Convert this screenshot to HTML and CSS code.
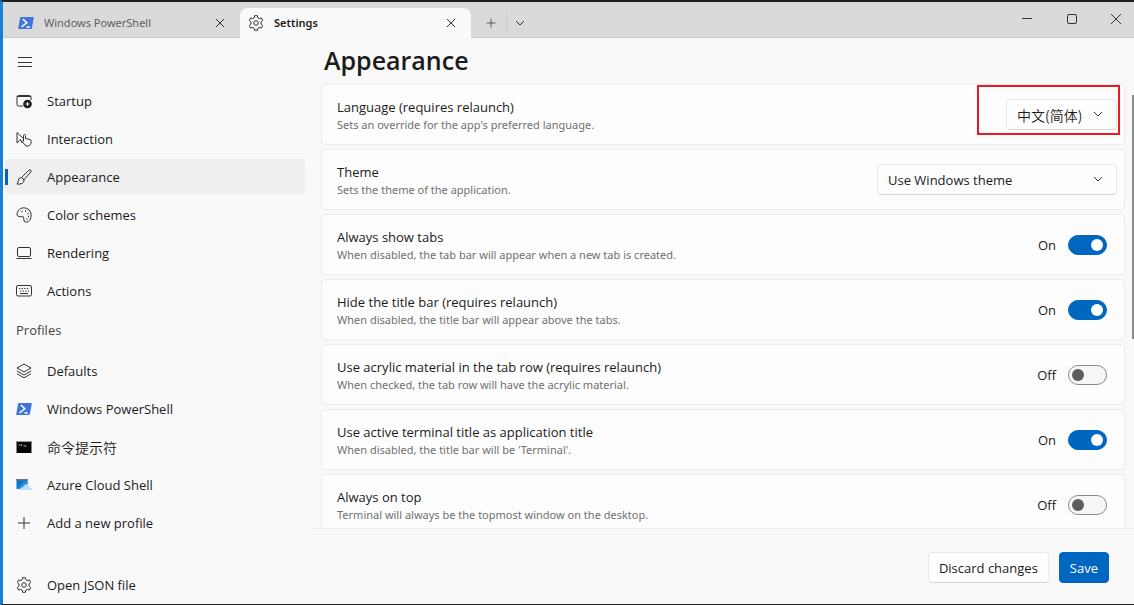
FILE: index.html
```html
<!DOCTYPE html>
<html lang="en">
<head>
<meta charset="utf-8">
<title>Settings</title>
<link rel="stylesheet" href="styles.css">
</head>
<body>
<svg class="defs" aria-hidden="true">
  <symbol id="gear" viewBox="0 0 16 16"><path d="M6.600 .7h2.800l.5 2.200 1.300.7 2.100-.7 1.400 2.500-1.600 1.500v2.200l1.600 1.500-1.400 2.500-2.100-.7-1.300.7-.5 2.200H6.600l-.5-2.200-1.300-.7-2.100.7-1.400-2.500 1.600-1.500V6.900L1.300 5.400l1.400-2.500 2.100.7 1.300-.7z" stroke-linejoin="round"/><circle cx="8" cy="8" r="2.300"/></symbol>
  <symbol id="close" viewBox="0 0 16 16"><path d="M4 4l8 8M12 4l-8 8"/></symbol>
  <symbol id="plus" viewBox="0 0 16 16"><path d="M8 2v12M2 8h12"/></symbol>
  <symbol id="chevron" viewBox="0 0 16 16"><path d="M4 6l4 4 4-4"/></symbol>
  <symbol id="powershell" viewBox="0 0 16 16"><path d="M3 2h12.200q.7 0 .6.700l-2 10.600q-.2.700-.9.700H.8q-.7 0-.6-.7L2.100 2.700Q2.300 2 3 2z" fill="#3f74da" stroke="none"/><path d="M4.800 4l4 3.800-5.300 4M8.500 11.900h3.300" fill="none" stroke="#fff" stroke-width="1.500"/></symbol>
</svg>
<div class="window">
  <header class="titlebar">
    <div class="tab">
      <svg class="icon"><use href="#powershell"/></svg>
      <span class="tab-title">Windows PowerShell</span>
      <button class="tab-button" aria-label="Close Windows PowerShell"><svg class="icon"><use href="#close"/></svg></button>
    </div>
    <div class="tab tab-active">
      <svg class="icon"><use href="#gear"/></svg>
      <span class="tab-title">Settings</span>
      <button class="tab-button" aria-label="Close Settings"><svg class="icon"><use href="#close"/></svg></button>
    </div>
    <div class="new-tab">
      <button class="new-button" aria-label="New tab"><svg class="icon-small"><use href="#plus"/></svg></button>
      <button class="new-button new-menu" aria-label="New tab menu"><svg class="icon"><use href="#chevron"/></svg></button>
    </div>
    <div class="window-controls">
      <button class="window-button" aria-label="Minimize"><svg class="icon" viewBox="0 0 16 16"><path d="M3 6.500h10"/></svg></button>
      <button class="window-button" aria-label="Maximize"><svg class="icon" viewBox="0 0 16 16"><rect x="3.500" y="2.500" width="9" height="9" rx="1.500"/></svg></button>
      <button class="window-button" aria-label="Close"><svg class="icon" viewBox="0 0 16 16"><path d="M3 2l10 10M13 2L3 12"/></svg></button>
    </div>
  </header>
  <div class="body">
    <nav class="sidebar">
      <button class="menu-button" aria-label="Menu"><svg class="icon" viewBox="0 0 16 16"><path d="M1 3.500h14M1 8.500h14M1 12.500h14"/></svg></button>
      <div class="nav-list">
        <a class="nav-item" href="#"><svg class="icon" viewBox="0 0 16 16"><path d="M7 13H2.500Q1 13 1 11.500V4q0-1.500 1.500-1.500h11Q15 2.500 15 4v3M1 3.500h14"/><circle cx="11.500" cy="11" r="4.300" fill="#1b1b1b" stroke="none"/><path d="M9.500 11h4M11.500 9v4" stroke="#fff"/></svg>Startup</a>
        <a class="nav-item" href="#"><svg class="icon" viewBox="0 0 16 16"><path d="M3.500 9.500L1 12V1.500l7 6.500M4 8l2 4"/><path d="M7.500 10V4.500q0-1 1-1t1 1v3l4.500 1q1.500.5 1.300 2l-.5 2.500-2 2h-3L8 12.500 5.500 10.500q.5-1 2-.5z"/></svg>Interaction</a>
        <a class="nav-item nav-current" href="#" aria-current="page"><svg class="icon" viewBox="0 0 16 16"><path d="M5.500 8.500L13 1.200q1-.7 1.800 0 .7.800 0 1.800L8 10.800zM5.500 8.500L8 10.800q.3 2.500-1.800 3.600Q4 15.500.9 15q1.300-1.200 1.300-3 .2-3.300 3.300-3.500z"/></svg>Appearance</a>
        <a class="nav-item" href="#"><svg class="icon" viewBox="0 0 16 16"><path d="M1 6.500Q2.500 1 8 .8q6.500.5 7.200 7-.2 6.800-5 7.400-3-.2-2.400-3.400.2-2.500-1.600-2.300-1.800.4-3.200.2Q.5 9 1 6.500z"/><path d="M5.500 4.500h1M9 4h1M11.500 6.500h1M12 9.500h1M10.500 12h1" stroke-width="1.500"/></svg>Color schemes</a>
        <a class="nav-item" href="#"><svg class="icon" viewBox="0 0 16 16"><rect x="1.500" y="2.500" width="13" height="9" rx="1.500"/><path d="M.5 13.500h15"/></svg>Rendering</a>
        <a class="nav-item" href="#"><svg class="icon" viewBox="0 0 16 16"><rect x=".5" y="2.500" width="15" height="10.500" rx="1.500"/><path d="M3 5.500h10.500M4 8h9" stroke-dasharray="1.300 1.300"/><path d="M4 10.500h8"/></svg>Actions</a>
        <h2 class="nav-heading">Profiles</h2>
        <a class="nav-item" href="#"><svg class="icon" viewBox="0 0 16 16"><path d="M8 1l7 4-7 4-7-4zM1 8l7 4 7-4M1 10.800l7 4 7-4"/></svg>Defaults</a>
        <a class="nav-item" href="#"><svg class="icon"><use href="#powershell"/></svg>Windows PowerShell</a>
        <a class="nav-item" href="#"><svg class="icon" viewBox="0 0 16 16"><path d="M.5 2h15v12H.5z" fill="#050505" stroke="none"/><path d="M.5 2.500h15" stroke="#999"/><path d="M2.500 6h2M5.500 5.500v1.500M7.500 7h3" stroke="#bbb"/></svg><span lang="zh-CN">命令提示符</span></a>
        <a class="nav-item" href="#"><svg class="icon" viewBox="0 0 16 16"><path d="M.5 2h11v10H.5z" fill="#0b73cf" stroke="none"/><path d="M.5 2h11v1.500H.5z" fill="#68727a" stroke="none"/><path d="M.5 12l8-8h3v3l-5 5z" fill="#278ce0" stroke="none"/><path d="M4 13q0-2.500 3-3 1-3 4-2.700 2.500.5 2.500 3 2 .2 2.300 2.700z" fill="#b9e1f8" stroke="none"/></svg>Azure Cloud Shell</a>
        <a class="nav-item" href="#"><svg class="icon"><use href="#plus"/></svg>Add a new profile</a>
      </div>
      <a class="nav-item nav-bottom" href="#"><svg class="icon"><use href="#gear"/></svg>Open JSON file</a>
    </nav>
    <main class="content">
      <h1 class="page-title">Appearance</h1>
      <div class="settings">
        <section class="card">
          <div class="card-text"><label class="name" for="language">Language (requires relaunch)</label><p class="hint">Sets an override for the app's preferred language.</p></div>
          <div class="picker picker-short"><select id="language" lang="zh-CN"><option>中文(简体)</option></select><svg class="icon picker-arrow"><use href="#chevron"/></svg></div>
          <div class="highlight"></div>
        </section>
        <section class="card">
          <div class="card-text"><label class="name" for="theme">Theme</label><p class="hint">Sets the theme of the application.</p></div>
          <div class="picker"><select id="theme"><option>Use Windows theme</option></select><svg class="icon picker-arrow"><use href="#chevron"/></svg></div>
        </section>
        <section class="card">
          <div class="card-text"><label class="name" for="tabs">Always show tabs</label><p class="hint">When disabled, the tab bar will appear when a new tab is created.</p></div>
          <div class="switch"><span>On</span><input id="tabs" type="checkbox" role="switch" checked></div>
        </section>
        <section class="card">
          <div class="card-text"><label class="name" for="titlebar">Hide the title bar (requires relaunch)</label><p class="hint">When disabled, the title bar will appear above the tabs.</p></div>
          <div class="switch"><span>On</span><input id="titlebar" type="checkbox" role="switch" checked></div>
        </section>
        <section class="card">
          <div class="card-text"><label class="name" for="acrylic">Use acrylic material in the tab row (requires relaunch)</label><p class="hint">When checked, the tab row will have the acrylic material.</p></div>
          <div class="switch"><span>Off</span><input id="acrylic" type="checkbox" role="switch"></div>
        </section>
        <section class="card">
          <div class="card-text"><label class="name" for="title">Use active terminal title as application title</label><p class="hint">When disabled, the title bar will be 'Terminal'.</p></div>
          <div class="switch"><span>On</span><input id="title" type="checkbox" role="switch" checked></div>
        </section>
        <section class="card">
          <div class="card-text"><label class="name" for="ontop">Always on top</label><p class="hint">Terminal will always be the topmost window on the desktop.</p></div>
          <div class="switch"><span>Off</span><input id="ontop" type="checkbox" role="switch"></div>
        </section>
      </div>
      <div class="scroll-thumb"></div>
      <footer class="actions">
        <button class="button">Discard changes</button>
        <button class="button button-primary">Save</button>
      </footer>
    </main>
  </div>
</div>
</body>
</html>
```
FILE: styles.css
```css
* { box-sizing: border-box; }
body {
  margin: 0;
  font: 13px/18px "Open Sans", "Noto Sans CJK SC", sans-serif;
  color: #1b1b1b;
}
button, select { font: inherit; color: inherit; }
button { border: 0; padding: 0; background: none; }
:lang(zh-CN) { font-family: "Noto Sans CJK SC", sans-serif; font-weight: 350; }
.defs { position: absolute; width: 0; height: 0; }
.icon, .icon-small {
  width: 16px;
  height: 16px;
  flex: none;
  fill: none;
  stroke: #333;
  stroke-width: 1;
}
.icon-small { width: 12px; height: 12px; }

.window {
  height: 100vh;
  display: flex;
  flex-direction: column;
  background: #f9f9f9;
  border-top: 2px solid #1f1f1f;
  border-left: 3px solid #1b7fd4;
  border-bottom: 1px solid #1f1f1f;
}

.titlebar {
  display: flex;
  align-items: flex-end;
  height: 36px;
  flex: none;
  background: #dadada;
  box-shadow: inset 0 -1px #cbcbcb;
}
.tab {
  display: flex;
  align-items: center;
  gap: 10px;
  width: 237px;
  height: 30px;
  padding: 0 12px 0 15px;
  font-family: "Noto Sans", sans-serif;
  font-size: 11px;
  color: #606060;
}
.tab-active {
  width: 231px;
  padding: 0 12px 0 8px;
  color: #1b1b1b;
  font-weight: 600;
  background: #f9f9f9;
  border-radius: 8px 8px 0 0;
}
.tab-title { flex: 1; }
.tab-button { display: flex; }
.new-tab { display: flex; align-items: center; height: 30px; padding-left: 4px; }
.new-button { display: flex; justify-content: center; align-items: center; width: 31px; height: 24px; }
.new-menu { width: 26px; border-left: 1px solid #cbcbcb; }
.window-controls { display: flex; align-self: stretch; margin-left: auto; overflow: hidden; }
.window-button { display: flex; justify-content: center; align-items: center; width: 45px; }
.window-button:last-child { width: 44px; margin-right: -4px; }

.body { flex: 1; min-height: 0; display: flex; }
.sidebar {
  width: 306px;
  flex: none;
  display: flex;
  flex-direction: column;
  padding: 16px 4px 2px 2px;
}
.menu-button { display: flex; padding-left: 12px; }
.nav-list { display: grid; gap: 3px; padding-top: 13px; }
.nav-item {
  display: flex;
  align-items: center;
  gap: 15px;
  height: 35px;
  padding-left: 11px;
  color: inherit;
  text-decoration: none;
  border-radius: 4px;
}
.nav-item span { font-size: 14px; }
.nav-current { background: linear-gradient(#0067c0, #0067c0) left center / 3px 16px no-repeat #efefef; }
.nav-heading { margin: 0; padding-left: 11px; font: inherit; line-height: 39px; color: #444; }
.nav-bottom { margin-top: auto; }

.content {
  flex: 1;
  min-width: 0;
  display: flex;
  flex-direction: column;
  position: relative;
}
.page-title {
  margin: 0;
  padding: 4px 15px 6px;
  font-size: 25px;
  line-height: 36px;
  font-weight: 600;
}
.settings {
  flex: 1;
  min-height: 0;
  overflow-y: auto;
  scrollbar-width: none;
  display: flex;
  flex-direction: column;
  gap: 4px;
  padding: 0 9px 0 12px;
}
.card {
  position: relative;
  flex: none;
  display: flex;
  align-items: center;
  justify-content: space-between;
  min-height: 61px;
  padding: 0 17px 0 15px;
  background: #fdfdfd;
  border: 1px solid #ececec;
  border-radius: 4px;
}
.card-text { padding-top: 2px; }
.name { display: block; }
.hint { margin: 0; font-family: "Noto Sans", sans-serif; font-size: 11px; line-height: 17px; color: #707070; }
.picker { position: relative; width: 240px; margin-right: -10px; }
.picker-short { width: 111px; }
.picker select {
  display: block;
  appearance: none;
  width: 100%;
  height: 31px;
  padding: 0 10px;
  background: #fefefe;
  border: 1px solid #e9e9e9;
  border-bottom-color: #d4d4d4;
  border-radius: 4px;
}
.picker-short select { font-size: 14px; }
.picker-arrow { position: absolute; right: 11px; top: 7px; pointer-events: none; }
.highlight {
  position: absolute;
  top: 0;
  right: 4px;
  width: 143px;
  height: 50px;
  border: 2px solid #e81c24;
  pointer-events: none;
}
.switch { display: flex; align-items: center; gap: 12px; }
.switch input {
  appearance: none;
  display: flex;
  align-items: center;
  width: 39px;
  height: 20px;
  margin: 0;
  padding: 0 3px;
  background: #f6f6f6;
  border: 1px solid #8a8a8a;
  border-radius: 10px;
}
.switch input::before { content: ""; width: 12px; height: 12px; border-radius: 50%; background: #5d5d5d; }
.switch input:checked { justify-content: flex-end; background: #0067c0; border-color: #0067c0; }
.switch input:checked::before { background: #fff; }
.scroll-thumb { position: absolute; right: 0; top: 57px; width: 2px; height: 244px; background: #8a8a8a; }

.actions {
  flex: none;
  display: flex;
  justify-content: flex-end;
  gap: 10px;
  padding: 23px 25px 21px;
  border-top: 1px solid #efefef;
}
.button {
  height: 31px;
  padding: 0 10px;
  background: #fefefe;
  border: 1px solid #e9e9e9;
  border-bottom-color: #d4d4d4;
  border-radius: 4px;
}
.button-primary { background: #0067c0; border-color: #0067c0; color: #fff; }
```
